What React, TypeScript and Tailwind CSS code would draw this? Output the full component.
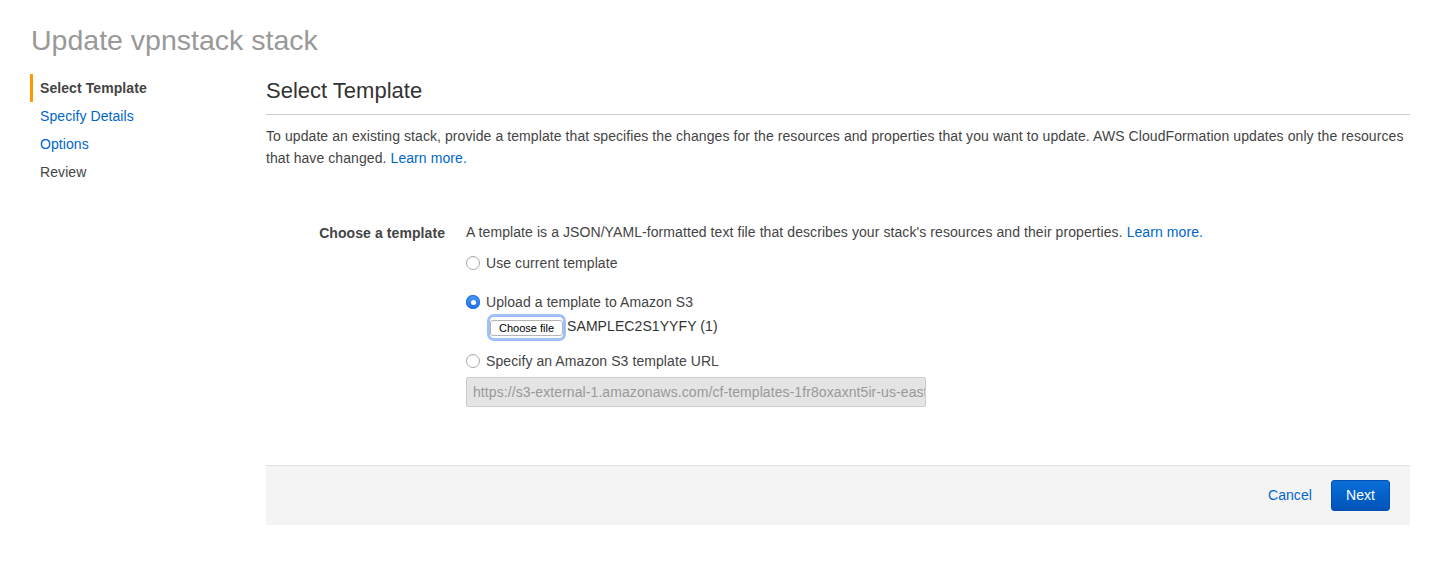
import { useState } from 'react';

const steps = [
  { label: 'Select Template', active: true },
  { label: 'Specify Details', link: true },
  { label: 'Options', link: true },
  { label: 'Review' },
];

function Radio({ checked }: { checked?: boolean }) {
  if (checked) {
    return (
      <span className="flex h-[14px] w-[14px] shrink-0 items-center justify-center rounded-full bg-gradient-to-b from-[#4a97fb] to-[#1e6fea] shadow-[inset_0_0_0_1px_#2a72df]">
        <span className="h-[5px] w-[5px] rounded-full bg-white" />
      </span>
    );
  }
  return <span className="h-[14px] w-[14px] shrink-0 rounded-full border border-[#a9a9a9] bg-white shadow-[inset_0_1px_1px_rgba(0,0,0,0.05)]" />;
}

export default function App() {
  const [choice] = useState('upload');

  return (
    <div className="min-h-[566px] bg-white font-['Liberation_Sans',Arial,sans-serif] text-[14px] tracking-[0.08px] text-[#444]">
      <div className="pl-[31px] pt-[23px]">
        <h1 className="text-[28.5px] leading-[34px] tracking-normal text-[#999]">Update vpnstack stack</h1>
      </div>

      <div className="mt-[18px] flex pr-[30px]">
        {/* sidebar */}
        <nav className="-mt-[1px] w-[266px] shrink-0 pl-[30px]">
          <ul className="flex flex-col">
            {steps.map((s) => (
              <li
                key={s.label}
                className={`flex h-[28px] items-center border-l-[3px] pl-[7px] ${
                  s.active ? 'border-[#f90] font-bold text-[#444]' : 'border-transparent'
                } ${s.link ? 'text-[#0066cc]' : ''}`}
              >
                {s.label}
              </li>
            ))}
          </ul>
        </nav>

        {/* main */}
        <main className="flex-1">
          <h2 className="pt-[3px] text-[22px] leading-[26px] tracking-normal text-[#333]">Select Template</h2>
          <hr className="mt-[10px] border-t border-[#ccc]" />
          <p className="mt-[10px] leading-[22px]">
            To update an existing stack, provide a template that specifies the changes for the resources and properties that you want to update. AWS CloudFormation updates only the resources
            that have changed. <a className="text-[#0066cc]">Learn more.</a>
          </p>

          <div className="mt-[54px] flex">
            <div className="w-[200px] shrink-0 pr-[21px] text-right font-bold leading-[20px]">Choose a template</div>
            <div className="flex-1">
              <p className="leading-[18px]">
                A template is a JSON/YAML-formatted text file that describes your stack's resources and their properties.{' '}
                <a className="text-[#0066cc]">Learn more.</a>
              </p>

              <label className="mt-[13px] flex items-center gap-[6px] leading-[18px]">
                <Radio checked={choice === 'current'} />
                Use current template
              </label>

              <label className="mt-[21px] flex items-center gap-[6px] leading-[18px]">
                <Radio checked={choice === 'upload'} />
                Upload a template to Amazon S3
              </label>
              <div className="mt-[6px] flex items-center pl-[24px]">
                <span className="rounded-[4px] shadow-[0_0_0_3px_#9ec1f7]">
                  <button className="rounded-[3px] border border-[#b5b5b5] bg-white px-[8px] text-[11px] leading-[14px] tracking-normal text-black">
                    Choose file
                  </button>
                </span>
                <span className="ml-[4px] -mt-[4px] leading-[18px] text-[#333]">SAMPLEC2S1YYFY (1)</span>
              </div>

              <label className="mt-[14px] flex items-center gap-[6px] leading-[18px]">
                <Radio checked={choice === 'url'} />
                Specify an Amazon S3 template URL
              </label>
              <div className="mt-[7px] h-[30px] w-[460px] overflow-hidden whitespace-nowrap rounded-[2px] border border-[#ccc] bg-[#e4e4e4] px-[6px] leading-[28px] text-[#999]">
                https://s3-external-1.amazonaws.com/cf-templates-1fr8oxaxnt5ir-us-east-1/template
              </div>
            </div>
          </div>

          <div className="mt-[58px] flex h-[60px] items-center justify-end gap-[19px] border-t border-[#e1e1e1] bg-[#f4f4f4] pr-[20px]">
            <a className="text-[#0066cc]">Cancel</a>
            <button className="h-[31px] w-[59px] rounded-[3px] border border-[#0350b5] bg-gradient-to-b from-[#0a6fd8] to-[#0053b8] text-white">
              Next
            </button>
          </div>
        </main>
      </div>
    </div>
  );
}
